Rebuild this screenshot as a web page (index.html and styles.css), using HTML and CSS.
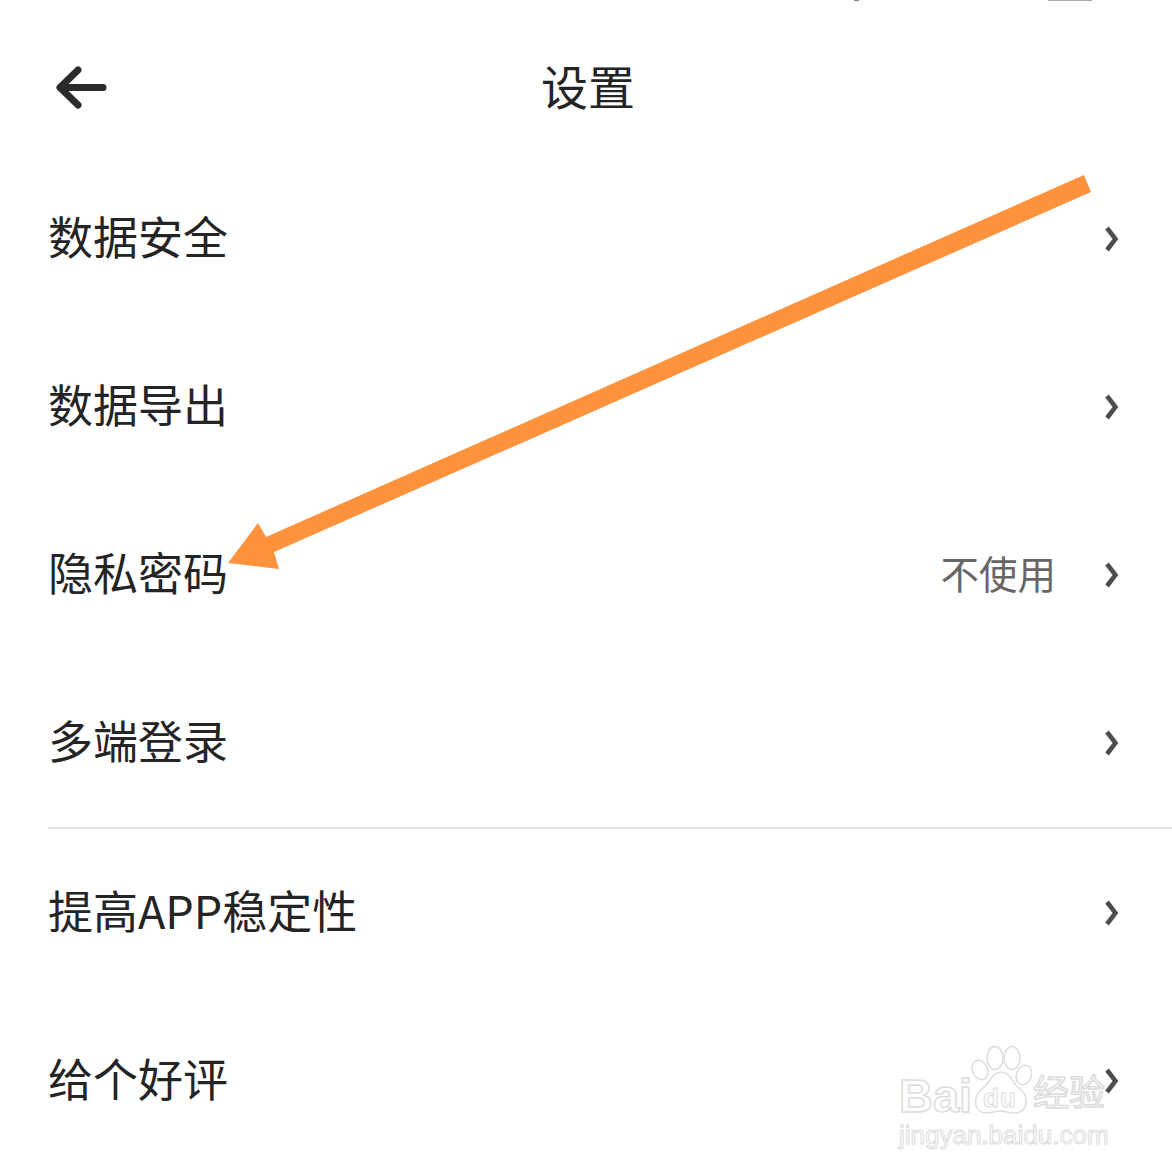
FILE: index.html
```html
<!DOCTYPE html>
<html lang="zh-CN">
<head>
    <meta charset="UTF-8">
    <meta name="viewport" content="width=device-width, initial-scale=1.0">
    <title>设置</title>
    <link rel="stylesheet" href="styles.css">
</head>
<body>

<div class="page">
    <div class="status-bits">
        <span class="status-dot"></span>
        <span class="status-bar"></span>
    </div>

    <header class="header">
        <svg class="back" width="52" height="44" viewBox="0 0 52 44">
            <path d="M22 4 L4 21.500 L22 39 M4 21.500 H47" fill="none" stroke="#2b2b2b" stroke-width="7" stroke-linecap="round" stroke-linejoin="round"/>
        </svg>
        <h1 class="title">设置</h1>
    </header>

    <div class="group">
        <div class="row">
            <span class="label">数据安全</span>
            <svg class="chev" width="16" height="28" viewBox="0 0 16 28"><path d="M3 3 L11.500 14 L3 25" fill="none" stroke="#4d4d4d" stroke-width="4.500"/></svg>
        </div>
        <div class="row">
            <span class="label">数据导出</span>
            <svg class="chev" width="16" height="28" viewBox="0 0 16 28"><path d="M3 3 L11.500 14 L3 25" fill="none" stroke="#4d4d4d" stroke-width="4.500"/></svg>
        </div>
        <div class="row">
            <span class="label">隐私密码</span>
            <span class="value">不使用</span>
            <svg class="chev" width="16" height="28" viewBox="0 0 16 28"><path d="M3 3 L11.500 14 L3 25" fill="none" stroke="#4d4d4d" stroke-width="4.500"/></svg>
        </div>
        <div class="row">
            <span class="label">多端登录</span>
            <svg class="chev" width="16" height="28" viewBox="0 0 16 28"><path d="M3 3 L11.500 14 L3 25" fill="none" stroke="#4d4d4d" stroke-width="4.500"/></svg>
        </div>
    </div>

    <div class="divider"></div>

    <div class="group">
        <div class="row">
            <span class="label">提高APP稳定性</span>
            <svg class="chev" width="16" height="28" viewBox="0 0 16 28"><path d="M3 3 L11.500 14 L3 25" fill="none" stroke="#4d4d4d" stroke-width="4.500"/></svg>
        </div>
        <div class="row">
            <span class="label">给个好评</span>
            <svg class="chev" width="16" height="28" viewBox="0 0 16 28"><path d="M3 3 L11.500 14 L3 25" fill="none" stroke="#4d4d4d" stroke-width="4.500"/></svg>
        </div>
    </div>

    <!-- annotation drawn over the screenshot -->
    <svg class="arrow" width="1172" height="1172" viewBox="0 0 1172 1172">
        <polygon points="1084,175 1091,192 274,552 279,569 228,563 258,523 266,537" fill="#ff923c"/>
    </svg>

    <div class="watermark">
        <div class="mark-top">
            <span class="mark-bai">Bai</span>
            <span class="mark-paw">
                <svg width="62" height="70" viewBox="0 0 62 70">
                    <g fill="#fff" stroke="#dcdcdc" stroke-width="1.500">
                        <ellipse cx="10" cy="25" rx="7.500" ry="10" transform="rotate(-25 10 25)"/>
                        <ellipse cx="25" cy="13" rx="8" ry="11.500"/>
                        <ellipse cx="42" cy="13" rx="8" ry="11.500"/>
                        <ellipse cx="54" cy="30" rx="7.500" ry="10" transform="rotate(20 54 30)"/>
                        <path d="M31 27 C40 27 42 38 50 44 C60 52 58 68 44 68 C38 68 36 66 31 66 C26 66 22 68 16 68 C4 68 2 52 12 44 C20 38 22 27 31 27 Z"/>
                    </g>
                </svg>
                <span class="mark-du">du</span>
            </span>
            <span class="mark-cn">经验</span>
        </div>
        <div class="mark-url">jingyan.baidu.com</div>
    </div>
</div>

</body>
</html>
```

FILE: styles.css
```css
body {
    margin: 0;
    background-color: #fff;
    font-family: "Noto Sans CJK SC", "Noto Sans", sans-serif;
    color: #242424;
}

.page {
    position: relative;
    width: 1172px;
    height: 1172px;
    overflow: hidden;
}

.status-bits {
    position: absolute;
    top: 0;
    left: 0;
}
.status-dot {
    position: absolute;
    left: 854px;
    top: 0;
    width: 5px;
    height: 1px;
    background-color: #888;
}
.status-bar {
    position: absolute;
    left: 1048px;
    top: 0;
    width: 44px;
    height: 1px;
    background-color: #aaa;
}

.header {
    height: 154px;
    padding-top: 15px;
    box-sizing: border-box;
    display: flex;
    align-items: center;
    justify-content: center;
    position: relative;
}
.back {
    position: absolute;
    left: 56px;
    top: 66px;
}
.title {
    margin: 0 0 0 4px;
    font-size: 47px;
    font-weight: 400;
    line-height: 1;
}

.row {
    height: 168px;
    display: flex;
    align-items: center;
    padding: 0 52px 0 48px;
}
.label {
    font-size: 45px;
    line-height: 1;
    flex: 1;
    margin-bottom: 5px;
}
.value {
    font-size: 38.500px;
    line-height: 1;
    color: #666;
    margin-right: 48px;
    margin-bottom: 3px;
}
.chev {
    display: block;
    margin-top: 2px;
}

.divider {
    height: 2px;
    margin-top: 1px;
    margin-left: 48px;
    background-color: #e2e2e2;
    margin-bottom: -1px;
}

.arrow {
    position: absolute;
    top: 0;
    left: 0;
}

.watermark {
    position: absolute;
    left: 899px;
    top: 1045px;
    width: 214px;
    color: transparent;
    font-family: "Liberation Sans", sans-serif;
}
.mark-top {
    display: flex;
    align-items: flex-end;
    height: 70px;
}
.mark-bai {
    width: 71px;
    font-size: 47px;
    font-weight: 700;
    line-height: 52px;
    margin-bottom: -7px;
    -webkit-text-stroke: 1.500px #dcdcdc;
}
.mark-paw {
    position: relative;
    width: 63px;
    height: 70px;
}
.mark-paw svg {
    display: block;
}
.mark-du {
    position: absolute;
    left: 13px;
    top: 38px;
    font-size: 26px;
    font-weight: 700;
    line-height: 30px;
    letter-spacing: 1px;
    -webkit-text-stroke: 1px #dcdcdc;
}
.mark-cn {
    font-family: "Noto Sans CJK SC", sans-serif;
    font-size: 36px;
    line-height: 50px;
    -webkit-text-stroke: 1.500px #dcdcdc;
}
.mark-url {
    font-size: 26px;
    line-height: 30px;
    margin-top: 5px;
    white-space: nowrap;
    -webkit-text-stroke: 1px #dcdcdc;
}
```
